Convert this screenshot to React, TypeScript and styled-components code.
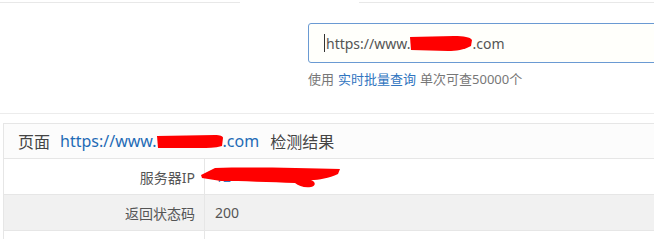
import React from "react";
import styled, { createGlobalStyle } from "styled-components";

const GlobalStyle = createGlobalStyle`
  body {
    margin: 0;
    padding: 0;
    background: #fff;
    overflow: hidden;
    font-family: "Noto Sans", "Noto Sans CJK SC", sans-serif;
  }
  * {
    box-sizing: border-box;
  }
`;

const Page = styled.div`
  width: 654px;
  height: 239px;
  overflow: hidden;
`;

const TopRule = styled.div`
  display: flex;
  padding-top: 2px;
  height: 3px;
`;

const RuleSegment = styled.div<{ $width?: number }>`
  height: 1px;
  background: #e8e8e8;
  ${(p) => (p.$width ? `width: ${p.$width}px;` : "flex: 1;")}
`;

const Gap = styled.div`
  width: 119px;
`;

const SearchArea = styled.div`
  padding: 20px 0 0 308px;
`;

const UrlBox = styled.div`
  width: 440px;
  height: 40px;
  border: 1px solid #6a9ad3;
  border-radius: 3px;
  background: #fffffb;
  display: flex;
  align-items: center;
  padding-left: 15px;
  font-size: 14px;
  color: #555;
  white-space: nowrap;
`;

const Caret = styled.span`
  display: inline-block;
  width: 1px;
  height: 18px;
  background: #333;
  margin-right: 1px;
`;

const Hint = styled.div`
  margin-top: 8px;
  font-size: 13px;
  line-height: 17px;
  color: #777;
  white-space: nowrap;
`;

const HintLink = styled.a`
  color: #2f74c0;
  text-decoration: none;
  margin: 0 4px;
`;

const Divider = styled.div`
  margin-top: 25px;
  height: 1px;
  background: #ececec;
`;

const Panel = styled.div`
  margin: 9px 0 0 3px;
  border: 1px solid #e6e6e6;
  border-right: none;
  border-bottom: none;
`;

const PanelHeader = styled.div`
  height: 35px;
  display: flex;
  align-items: center;
  padding-left: 14px;
  background: #fcfcfc;
  border-bottom: 1px solid #e6e6e6;
  font-size: 16px;
  color: #444;
  white-space: nowrap;
`;

const HeaderLink = styled.a`
  color: #1f6bb6;
  text-decoration: none;
  margin: 0 11px 0 10px;
  display: inline-flex;
  align-items: center;
`;

const Row = styled.div<{ $shade?: boolean }>`
  display: grid;
  grid-template-columns: 201px 1fr;
  height: 36px;
  border-bottom: 1px solid #e6e6e6;
  background: ${(p) => (p.$shade ? "#f1f1f1" : "#fff")};
  font-size: 14px;
  color: #555;
`;

const Label = styled.div`
  display: flex;
  align-items: center;
  justify-content: flex-end;
  padding-right: 9px;
  border-right: 1px solid #e6e6e6;
`;

const Value = styled.div`
  display: flex;
  align-items: center;
  padding-left: 10px;
  position: relative;
`;

const Redact = styled.svg<{ $w: number; $h: number }>`
  display: block;
  flex: none;
  width: ${(p) => p.$w}px;
  height: ${(p) => p.$h}px;
`;

const IpMask = styled.svg`
  position: absolute;
  left: -4px;
  top: 8px;
  width: 140px;
  height: 21px;
`;

const UrlMask = () => (
  <Redact $w={62} $h={15} viewBox="0 0 62 15" preserveAspectRatio="none">
    <path d="M0 1 L44 0 C54 0 60 1 62 4 L61 10 C54 14 46 15 38 15 L1 14 Z" fill="#f00" />
  </Redact>
);

const HeadMask = () => (
  <Redact $w={66} $h={13} viewBox="0 0 66 13" preserveAspectRatio="none">
    <path d="M0 1 L58 0 C63 0 66 1 66 3 L65 11 C58 13 50 13 44 13 L1 13 Z" fill="#f00" />
  </Redact>
);

export default function App() {
  return (
    <Page>
      <GlobalStyle />
      <TopRule>
        <RuleSegment $width={240} />
        <Gap />
        <RuleSegment />
      </TopRule>
      <SearchArea>
        <UrlBox>
          <Caret />
          https://www.
          <UrlMask />
          .com
        </UrlBox>
        <Hint>
          使用<HintLink href="#">实时批量查询</HintLink>单次可查50000个
        </Hint>
      </SearchArea>
      <Divider />
      <Panel>
        <PanelHeader>
          页面
          <HeaderLink href="#">
            https://www.
            <HeadMask />
            .com
          </HeaderLink>
          检测结果
        </PanelHeader>
        <Row>
          <Label>服务器IP</Label>
          <Value>
            <span style={{ color: "#3a78c0" }}>12</span>
            <IpMask viewBox="0 0 140 21" preserveAspectRatio="none">
              <path
                d="M0 8 L14 1 C50 0 100 1 139 2 L137 7 C128 11 118 13 110 13 C115 15 115 19 110 20 C103 21 98 19 94 16 C70 15 40 14 20 14 L1 11 Z"
                fill="#f00"
              />
            </IpMask>
          </Value>
        </Row>
        <Row $shade>
          <Label>返回状态码</Label>
          <Value>200</Value>
        </Row>
        <Row>
          <Label />
          <Value />
        </Row>
      </Panel>
    </Page>
  );
}
